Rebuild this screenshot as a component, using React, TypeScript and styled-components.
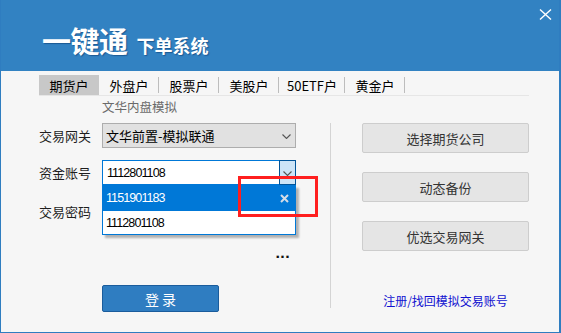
import React from "react";
import styled, { createGlobalStyle } from "styled-components";

const GlobalStyle = createGlobalStyle`
  html, body {
    margin: 0;
    padding: 0;
    background: #ffffff;
  }
  * {
    box-sizing: border-box;
  }
`;

const tabs = ["期货户", "外盘户", "股票户", "美股户", "50ETF户", "黄金户"];

const Chevron = () => (
  <svg width="9" height="5" viewBox="0 0 9 5">
    <path d="M0.5 0.5 L4.5 4.5 L8.5 0.5" fill="none" stroke="#555" strokeWidth="1.1" />
  </svg>
);

const App = () => {
  return (
    <>
      <GlobalStyle />
      <Window>
        <Header>
          <Title>
            <Big>一键通</Big>
            <Small>下单系统</Small>
          </Title>
          <CloseButton>
            <svg width="13" height="11" viewBox="0 0 13 11">
              <path d="M1 0.5 L12 10.5 M12 0.5 L1 10.5" stroke="#fff" strokeWidth="1.4" />
            </svg>
          </CloseButton>
        </Header>

        <Body>
          <TabBar>
            {tabs.map((t, i) => (
              <Tab key={t} $active={i === 0} $wide={t === "50ETF户"}>
                {t}
              </Tab>
            ))}
          </TabBar>

          <Main>
            <FormColumn>
              <Subtitle>文华内盘模拟</Subtitle>

              <Row>
                <Label>交易网关</Label>
                <Select>
                  <span>文华前置-模拟联通</span>
                  <SelectArrow>
                    <Chevron />
                  </SelectArrow>
                </Select>
              </Row>

              <Row $mt={12}>
                <Label>资金账号</Label>
                <Field>
                  <Combo>
                    <Digits>1112801108</Digits>
                    <ComboButton>
                      <Chevron />
                    </ComboButton>
                  </Combo>
                  <DropList>
                    <DropItem $selected>
                      <Digits>1151901183</Digits>
                      <RemoveMark>
                        <svg width="9" height="9" viewBox="0 0 9 9">
                          <path d="M1 1 L8 8 M8 1 L1 8" stroke="#d4dce6" strokeWidth="2" />
                        </svg>
                      </RemoveMark>
                    </DropItem>
                    <DropItem>
                      <Digits>1112801108</Digits>
                    </DropItem>
                  </DropList>
                  <Highlight />
                </Field>
              </Row>

              <Row $mt={14}>
                <Label>交易密码</Label>
                <PasswordBox />
              </Row>

              <MoreRow>
                <More>...</More>
              </MoreRow>

              <LoginButton>登 录</LoginButton>
            </FormColumn>

            <Divider />

            <SideColumn>
              <SideButton>选择期货公司</SideButton>
              <SideButton>动态备份</SideButton>
              <SideButton>优选交易网关</SideButton>
              <RegisterLink>注册/找回模拟交易账号</RegisterLink>
            </SideColumn>
          </Main>
        </Body>
      </Window>
    </>
  );
};

const cjk = `"Noto Sans CJK SC", "Noto Sans", sans-serif`;

const Window = styled.div`
  width: 561px;
  height: 333px;
  display: flex;
  flex-direction: column;
  border: 1px solid #2f7dc0;
  border-right-width: 2px;
  border-top: none;
  background: #f6f6f6;
  font-family: ${cjk};
  overflow: hidden;
`;

const Header = styled.div`
  height: 71px;
  flex-shrink: 0;
  background: #3282c2;
  display: flex;
  justify-content: space-between;
  align-items: flex-start;
  padding-left: 41px;
`;

const Title = styled.div`
  margin-top: 24px;
  display: flex;
  align-items: baseline;
  color: #fff;
  text-shadow: 1px 1px 1px rgba(0, 40, 90, 0.45);
`;

const Big = styled.span`
  font-size: 29px;
  font-weight: 700;
  line-height: 32px;
  letter-spacing: -0.5px;
`;

const Small = styled.span`
  font-size: 18px;
  font-weight: 700;
  margin-left: 9px;
`;

const CloseButton = styled.div`
  margin-top: 8px;
  margin-right: 7px;
  width: 14px;
  height: 12px;
  display: flex;
  align-items: center;
  justify-content: center;
`;

const Body = styled.div`
  flex: 1;
  padding-left: 38px;
  display: flex;
  flex-direction: column;
`;

const TabBar = styled.div`
  margin-top: 4px;
  width: 490px;
  height: 21px;
  display: flex;
  border-bottom: 1px solid #e6e6e6;
`;

const Tab = styled.div<{ $active?: boolean; $wide?: boolean }>`
  position: relative;
  width: ${(p) => (p.$wide ? 66 : 60)}px;
  height: 20px;
  display: flex;
  align-items: center;
  justify-content: center;
  font-size: 13px;
  color: #000;
  background: ${(p) => (p.$active ? "#c8c8c8" : "transparent")};

  &::after {
    content: "";
    display: ${(p) => (p.$active ? "none" : "block")};
    position: absolute;
    right: 0;
    top: 2px;
    width: 1px;
    height: 16px;
    background: #bdbdbd;
  }
`;

const Main = styled.div`
  display: flex;
  align-items: flex-start;
`;

const FormColumn = styled.div`
  width: 291px;
  display: flex;
  flex-direction: column;
`;

const Subtitle = styled.div`
  height: 27px;
  padding-left: 63px;
  padding-top: 3px;
  font-size: 12.5px;
  line-height: 16px;
  color: #6a6a6a;
`;

const Row = styled.div<{ $mt?: number }>`
  margin-top: ${(p) => p.$mt ?? 0}px;
  height: 25px;
  display: flex;
  align-items: center;
`;

const Label = styled.div`
  width: 63px;
  font-size: 13px;
  color: #1e1e1e;
`;

const Select = styled.div`
  width: 194px;
  height: 25px;
  background: #e1e1e1;
  border: 1px solid #adadad;
  display: flex;
  align-items: center;
  justify-content: space-between;
  padding-left: 3px;
  font-size: 13px;
  color: #000;
`;

const SelectArrow = styled.div`
  width: 17px;
  display: flex;
  justify-content: center;
  padding-top: 1px;
`;

const Field = styled.div`
  position: relative;
  width: 194px;
  height: 25px;
`;

const Combo = styled.div`
  height: 25px;
  background: #fff;
  border: 1px solid #0078d7;
  display: flex;
  align-items: center;
  justify-content: space-between;
  padding-left: 4px;
`;

const Digits = styled.span`
  font-family: "Liberation Sans", Arial, sans-serif;
  font-size: 12.5px;
  letter-spacing: -0.9px;
`;

const ComboButton = styled.div`
  width: 17px;
  height: 25px;
  margin: -1px -1px -1px 0;
  background: #cce4f7;
  border: 1px solid #005499;
  display: flex;
  align-items: center;
  justify-content: center;
  padding-top: 2px;
`;

const DropList = styled.div`
  position: absolute;
  left: 0;
  top: 25px;
  width: 194px;
  z-index: 2;
  background: #fff;
  border: 1px solid #0078d7;
  border-top: none;
  box-shadow: 3px 3px 2px rgba(0, 0, 0, 0.28);
`;

const DropItem = styled.div<{ $selected?: boolean }>`
  height: ${(p) => (p.$selected ? 26 : 23)}px;
  display: flex;
  align-items: center;
  justify-content: space-between;
  padding: 0 6px 0 3px;
  background: ${(p) => (p.$selected ? "#0078d7" : "#fff")};
  color: ${(p) => (p.$selected ? "#fff" : "#000")};
`;

const RemoveMark = styled.div`
  display: flex;
  align-items: center;
`;

const Highlight = styled.div`
  position: absolute;
  left: 136px;
  top: 16px;
  width: 80px;
  height: 41px;
  border: 3px solid #ff1f1f;
  z-index: 3;
`;

const PasswordBox = styled.div`
  width: 194px;
  height: 25px;
  background: #fff;
  border: 1px solid #7a7a7a;
`;

const MoreRow = styled.div`
  margin-top: 26px;
  height: 12px;
  display: flex;
  justify-content: flex-end;
  padding-right: 40px;
`;

const More = styled.div`
  font-family: "DejaVu Sans", sans-serif;
  font-size: 13px;
  font-weight: 700;
  line-height: 8px;
  letter-spacing: 0px;
  color: #111;
`;

const LoginButton = styled.div`
  margin-top: 23px;
  margin-left: 63px;
  width: 117px;
  height: 27px;
  background: #2f7dc1;
  border: 1px solid #1a5c9c;
  border-radius: 2px;
  display: flex;
  align-items: center;
  justify-content: center;
  color: #fff;
  font-size: 14px;
  white-space: pre;
`;

const Divider = styled.div`
  margin-top: 27px;
  width: 1px;
  height: 185px;
  background: #d4d4d4;
`;

const SideColumn = styled.div`
  margin-top: 27px;
  padding-left: 31px;
  display: flex;
  flex-direction: column;
  gap: 19px;
`;

const SideButton = styled.div`
  width: 167px;
  height: 30px;
  background: #e5e5e5;
  border: 1px solid #cdcdcd;
  border-radius: 2px;
  display: flex;
  align-items: center;
  justify-content: center;
  font-size: 13px;
  color: #333;
`;

const RegisterLink = styled.div`
  margin-top: 22px;
  width: 167px;
  text-align: center;
  font-size: 12px;
  color: #1010d0;
`;

export default App;
